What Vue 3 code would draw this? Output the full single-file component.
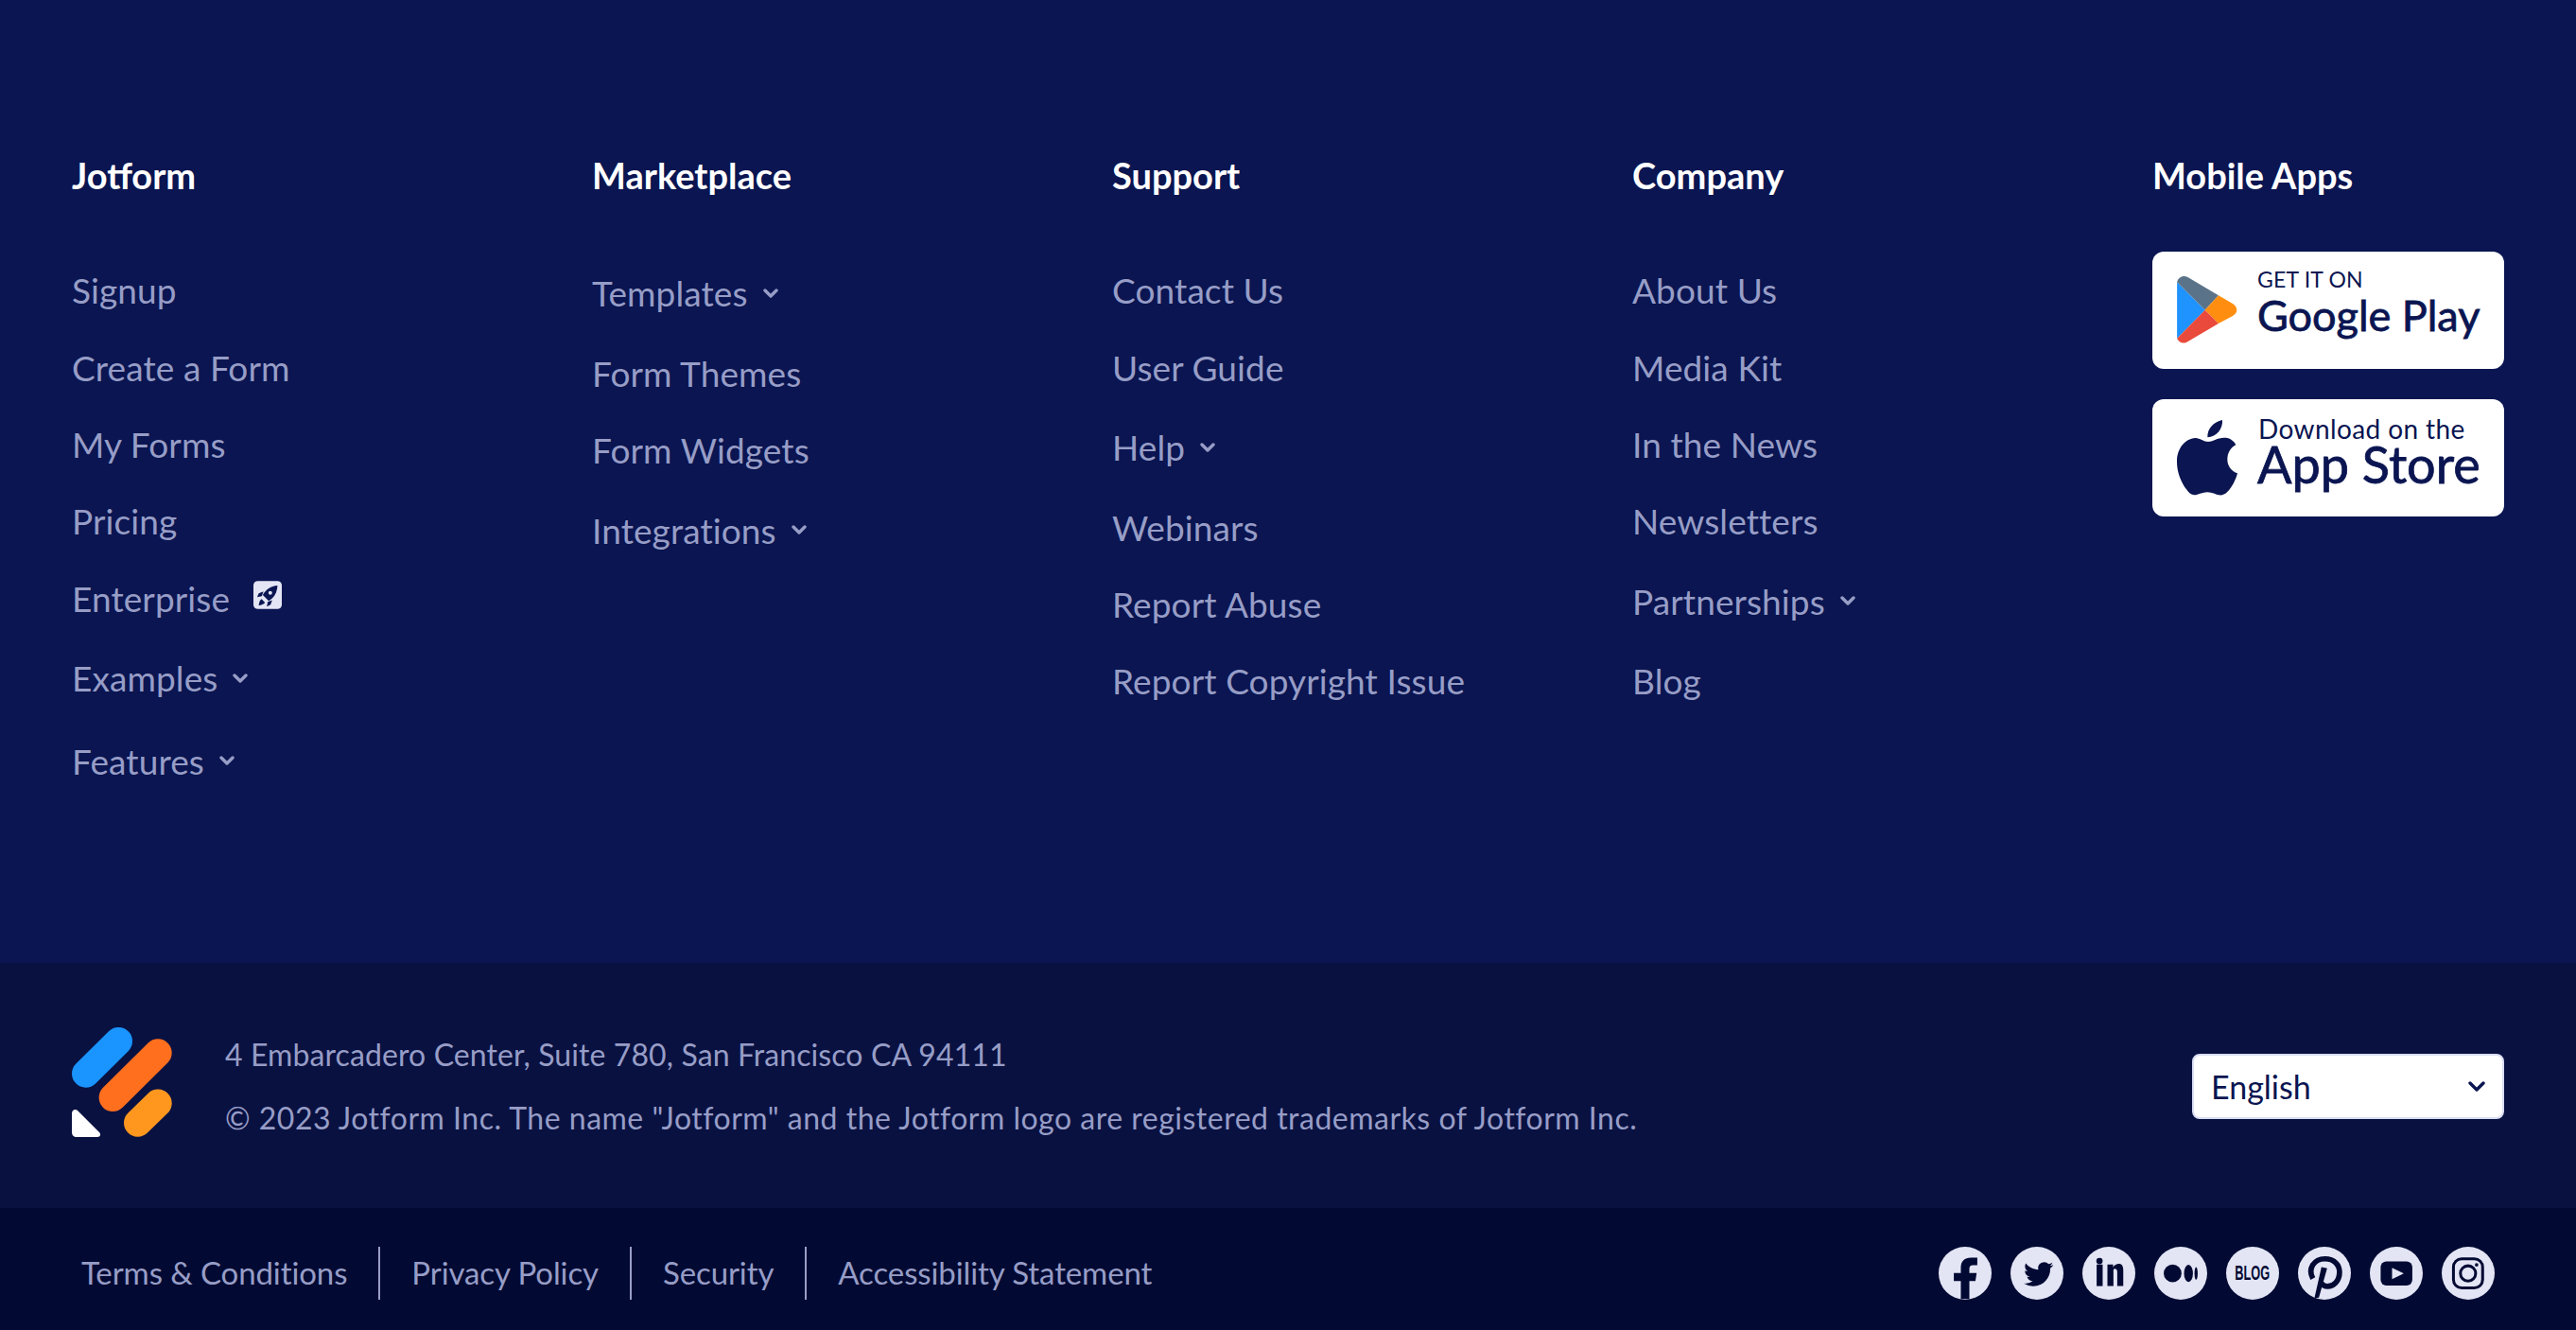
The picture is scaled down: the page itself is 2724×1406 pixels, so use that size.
<script setup>
const columns = [
  {
    title: 'Jotform',
    links: [
      { label: 'Signup' },
      { label: 'Create a Form' },
      { label: 'My Forms' },
      { label: 'Pricing' },
      { label: 'Enterprise', rocket: true },
      { label: 'Examples', more: true },
      { label: 'Features', more: true },
    ],
  },
  {
    title: 'Marketplace',
    links: [
      { label: 'Templates', more: true },
      { label: 'Form Themes' },
      { label: 'Form Widgets' },
      { label: 'Integrations', more: true },
    ],
  },
  {
    title: 'Support',
    links: [
      { label: 'Contact Us' },
      { label: 'User Guide' },
      { label: 'Help', more: true },
      { label: 'Webinars' },
      { label: 'Report Abuse' },
      { label: 'Report Copyright Issue' },
    ],
  },
  {
    title: 'Company',
    links: [
      { label: 'About Us' },
      { label: 'Media Kit' },
      { label: 'In the News' },
      { label: 'Newsletters' },
      { label: 'Partnerships', more: true },
      { label: 'Blog' },
    ],
  },
];

const legalLinks = ['Terms & Conditions', 'Privacy Policy', 'Security', 'Accessibility Statement'];
</script>

<template>
  <footer class="footer">
    <section class="footer-top">
      <div v-for="col in columns" :key="col.title" class="footer-col">
        <h4 class="col-title">{{ col.title }}</h4>
        <ul class="col-links">
          <li v-for="link in col.links" :key="link.label" class="col-link" :class="{ 'has-more': link.more }">
            <a>{{ link.label }}</a>
            <svg v-if="link.more" class="chevron" viewBox="0 0 16 10">
              <polyline points="2,2 8,8 14,2" />
            </svg>
            <svg v-if="link.rocket" class="rocket" viewBox="620 42 91 90">
              <rect x="620" y="42" width="91" height="90" rx="14" fill="#e3e5f5" />
              <path d="M697 57C676 59 660 69 650 87L669 106C687 96 696 79 697 57Z" fill="#0a1551" />
              <path d="M652 76L637 82L632 94L647 91Z" fill="#0a1551" />
              <path d="M680 104L675 118L663 124L666 109Z" fill="#0a1551" />
              <path d="M646 100C640 104 638 112 637 120C645 119 653 117 657 111Z" fill="#0a1551" />
              <circle cx="674" cy="80" r="6" fill="#e3e5f5" />
            </svg>
          </li>
        </ul>
      </div>

      <div class="footer-col">
        <h4 class="col-title">Mobile Apps</h4>
        <div class="store-list">
          <a class="store-btn">
            <svg class="store-icon play" viewBox="186 147 192 214">
              <path d="M186 166L275 255L186 345Z" fill="#1f93ff" />
              <path d="M186 166C190 150 205 143 220 150L318 208L275 255Z" fill="#5b7389" />
              <path d="M318 208L362 234C381 246 381 264 362 274L318 298L275 255Z" fill="#ff8e10" />
              <path d="M186 345L275 255L318 298L222 354C206 365 192 358 186 345Z" fill="#ea4a3b" />
            </svg>
            <div class="store-text">
              <span class="store-small play-small">GET IT ON</span>
              <span class="store-name play-name">Google Play</span>
            </div>
          </a>
          <a class="store-btn">
            <svg class="store-icon apple" viewBox="186 603 192 240">
              <path d="M283 658C282 630 302 610 330 603C332 632 312 655 283 658Z" fill="#0a1551" />
              <path d="M285 672C300 672 320 655 345 660C355 662 368 670 373 682C355 692 346 708 346 728C346 750 360 765 378 772C372 795 358 820 345 832C332 845 318 842 305 836C290 830 275 830 260 836C245 842 235 844 222 830C205 812 186 775 186 735C186 695 210 662 245 660C258 660 272 672 285 672Z" fill="#0a1551" />
            </svg>
            <div class="store-text">
              <span class="store-small app-small">Download on the</span>
              <span class="store-name app-name">App Store</span>
            </div>
          </a>
        </div>
      </div>
    </section>

    <section class="footer-mid">
      <svg class="logo" viewBox="0 0 106 116">
        <line x1="14.7" y1="49" x2="49.3" y2="14.7" stroke="#1a94ff" stroke-width="29.4" stroke-linecap="round" />
        <line x1="43.3" y1="74.3" x2="91" y2="27" stroke="#ff6f1e" stroke-width="29.4" stroke-linecap="round" />
        <line x1="69.7" y1="101" x2="91" y2="80.3" stroke="#ff971f" stroke-width="29.4" stroke-linecap="round" />
        <path d="M0 91C0 87 4 86 6 88L29 111C31 113 30 116 27 116H5C2 116 0 114 0 111Z" fill="#fff" />
      </svg>
      <div class="address">
        <p class="address-line">4 Embarcadero Center, Suite 780, San Francisco CA 94111</p>
        <p>© 2023 Jotform Inc. The name "Jotform" and the Jotform logo are registered trademarks of Jotform Inc.</p>
      </div>
      <div class="lang-select">
        <span>English</span>
        <svg class="lang-chevron" viewBox="0 0 18 12">
          <polyline points="2,2 9,9 16,2" />
        </svg>
      </div>
    </section>

    <section class="footer-bottom">
      <nav class="legal">
        <a v-for="item in legalLinks" :key="item" class="legal-link">{{ item }}</a>
      </nav>
      <div class="social">
        <svg class="social-icon" viewBox="0 0 167 167">
          <circle cx="83.5" cy="83.5" r="83.5" />
          <path class="cut" d="M70 165V108H48V83H70V66C70 45 82 34 102 34H122V58H108C100 58 97 62 97 70V83H120L116 108H97V165Z" />
        </svg>
        <svg class="social-icon" viewBox="0 0 167 167">
          <circle cx="83.5" cy="83.5" r="83.5" />
          <path class="cut" transform="translate(42 40) scale(3.875)" d="M23.953 4.57a10 10 0 01-2.825.775 4.958 4.958 0 002.163-2.723c-.951.555-2.005.959-3.127 1.184a4.92 4.92 0 00-8.384 4.482C7.69 8.095 4.067 6.13 1.64 3.162a4.822 4.822 0 00-.666 2.475c0 1.71.87 3.213 2.188 4.096a4.904 4.904 0 01-2.228-.616v.06a4.923 4.923 0 003.946 4.827 4.996 4.996 0 01-2.212.085 4.936 4.936 0 004.604 3.417 9.867 9.867 0 01-6.102 2.105c-.39 0-.779-.023-1.17-.067a13.995 13.995 0 007.557 2.209c9.053 0 13.998-7.496 13.998-13.985 0-.21 0-.42-.015-.63A9.935 9.935 0 0024 4.59z" />
        </svg>
        <svg class="social-icon" viewBox="0 0 167 167">
          <circle cx="83.5" cy="83.5" r="83.5" />
          <rect class="cut" x="45" y="56" width="19" height="68" />
          <circle class="cut" cx="54" cy="45" r="10" />
          <path class="cut" d="M79 124V56H97V65C101 58 108 54 115 54C125 54 129 62 129 74V124H110V80C110 72 107 69 102 69C97 69 98 75 98 82V124Z" />
        </svg>
        <svg class="social-icon" viewBox="0 0 167 167">
          <circle cx="83.5" cy="83.5" r="83.5" />
          <ellipse class="cut" cx="58" cy="84" rx="28" ry="28" />
          <ellipse class="cut" cx="108" cy="84" rx="14" ry="27" />
          <ellipse class="cut" cx="132" cy="84" rx="5" ry="20" />
        </svg>
        <div class="social-blog"><span>BLOG</span></div>
        <svg class="social-icon" viewBox="0 0 167 167">
          <circle cx="83.5" cy="83.5" r="83.5" />
          <path class="cut-line" d="M47 100C30 70 50 38 85 38C115 38 131 58 131 80C131 108 113 125 93 125C83 125 77 120 73 114" />
          <path class="cut" d="M74 64L92 68L66 160L52 162Z" />
        </svg>
        <svg class="social-icon" viewBox="0 0 167 167">
          <circle cx="83.5" cy="83.5" r="83.5" />
          <rect class="cut" x="34" y="46" width="100" height="76" rx="18" />
          <path d="M70 66L107 84L70 102Z" />
        </svg>
        <svg class="social-icon" viewBox="0 0 167 167">
          <circle cx="83.5" cy="83.5" r="83.5" />
          <rect class="cut-line thin" x="37" y="38" width="92" height="92" rx="26" />
          <circle class="cut-line thin" cx="83" cy="84" r="24" />
          <circle class="cut" cx="110" cy="57" r="5.5" />
        </svg>
      </div>
    </section>
  </footer>
</template>

<style scoped>
.footer {
  font-family: Lato, "Liberation Sans", sans-serif;
  color: #979dc6;
  height: 1406px;
  display: flex;
  flex-direction: column;
}

.footer-top {
  height: 1018px;
  box-sizing: border-box;
  padding: 161px 0 0 76px;
  background: #0a1551;
  display: grid;
  grid-template-columns: repeat(4, 550px) 1fr;
}

.col-title {
  margin: 0 0 57px;
  font-size: 38px;
  line-height: 48px;
  font-weight: 700;
  color: #fff;
}

.col-links {
  list-style: none;
  margin: 0;
  padding: 0;
}

.col-link {
  display: flex;
  align-items: center;
  height: 81.4px;
  font-size: 37px;
  letter-spacing: 0.1px;
}

.col-link.has-more {
  height: 87.6px;
}

.chevron {
  width: 16px;
  height: 10px;
  margin-left: 16px;
}

.chevron polyline {
  fill: none;
  stroke: #979dc6;
  stroke-width: 3.4;
  stroke-linecap: round;
  stroke-linejoin: round;
}

.rocket {
  width: 30px;
  height: 30px;
  margin: 0 0 6px 25px;
}

.store-list {
  display: flex;
  flex-direction: column;
  gap: 32px;
}

.store-btn {
  width: 372px;
  height: 124px;
  box-sizing: border-box;
  padding-left: 26px;
  display: flex;
  align-items: center;
  gap: 21px;
  background: #fff;
  border-radius: 12px;
  color: #0a1551;
}

.store-icon {
  flex-shrink: 0;
  width: 64px;
}

.store-icon.play {
  height: 71px;
  margin-top: -2px;
}

.store-icon.apple {
  height: 80px;
  margin-top: -1px;
}

.store-text {
  display: flex;
  flex-direction: column;
  margin-top: -12px;
}

.store-small {
  font-size: 23px;
  line-height: 28px;
}

.store-name {
  font-weight: 400;
  -webkit-text-stroke: 0.8px #0a1551;
}

.play-small {
  letter-spacing: 0.2px;
  margin-top: -6px;
}

.play-name {
  font-size: 45px;
  line-height: 48px;
}

.app-small {
  font-size: 28px;
  line-height: 30px;
  padding-left: 1px;
  letter-spacing: 0.4px;
  margin-top: -2px;
}

.app-name {
  font-size: 54px;
  line-height: 50px;
  margin-top: -2px;
}

.footer-mid {
  height: 259px;
  box-sizing: border-box;
  padding: 2px 76px 0;
  background: #091141;
  display: flex;
  align-items: center;
}

.logo {
  width: 106px;
  height: 116px;
  margin-bottom: 9px;
  flex-shrink: 0;
}

.address {
  margin-left: 56px;
  flex: 1;
  font-size: 32px;
  line-height: 67px;
  letter-spacing: 0.5px;
}

.address p {
  margin: 0;
}

.address .address-line {
  letter-spacing: 0.1px;
  margin-top: -2px;
}

.lang-select {
  width: 330px;
  height: 69px;
  box-sizing: border-box;
  padding: 0 18px 0 18px;
  display: flex;
  align-items: center;
  justify-content: space-between;
  background: #fff;
  border: 2px solid #dadef3;
  border-radius: 8px;
  color: #0a1551;
  font-size: 34px;
}

.lang-chevron {
  width: 18px;
  height: 12px;
}

.lang-chevron polyline {
  fill: none;
  stroke: #0a1551;
  stroke-width: 3.4;
  stroke-linecap: round;
  stroke-linejoin: round;
}

.footer-bottom {
  flex: 1;
  box-sizing: border-box;
  padding: 41px 86px 0 86px;
  background: #020a33;
  display: flex;
  justify-content: space-between;
  align-items: flex-start;
}

.legal {
  display: flex;
}

.legal-link {
  height: 56px;
  line-height: 55px;
  padding: 0 33px;
  border-right: 2px solid #979dc6;
  font-size: 33px;
  letter-spacing: -0.1px;
}

.legal-link:first-child {
  padding-left: 0;
}

.legal-link:last-child {
  border-right: 0;
}

.social {
  display: flex;
  gap: 20px;
}

.social-icon {
  width: 56px;
  height: 56px;
  fill: #e3e5f5;
}

.social-blog {
  width: 56px;
  height: 56px;
  display: flex;
  align-items: center;
  justify-content: center;
  border-radius: 50%;
  background: #e3e5f5;
  color: #020a33;
  font-family: "Liberation Sans", sans-serif;
  font-size: 22px;
  line-height: 24px;
  font-weight: 700;
}

.social-blog span {
  transform: scaleX(0.58);
}

.cut {
  fill: #020a33;
}

.cut-line {
  fill: none;
  stroke: #020a33;
  stroke-width: 17;
}

.cut-line.thin {
  stroke-width: 9;
}
</style>

<style>
html,
body {
  margin: 0;
  background: #0a1551;
}
</style>
